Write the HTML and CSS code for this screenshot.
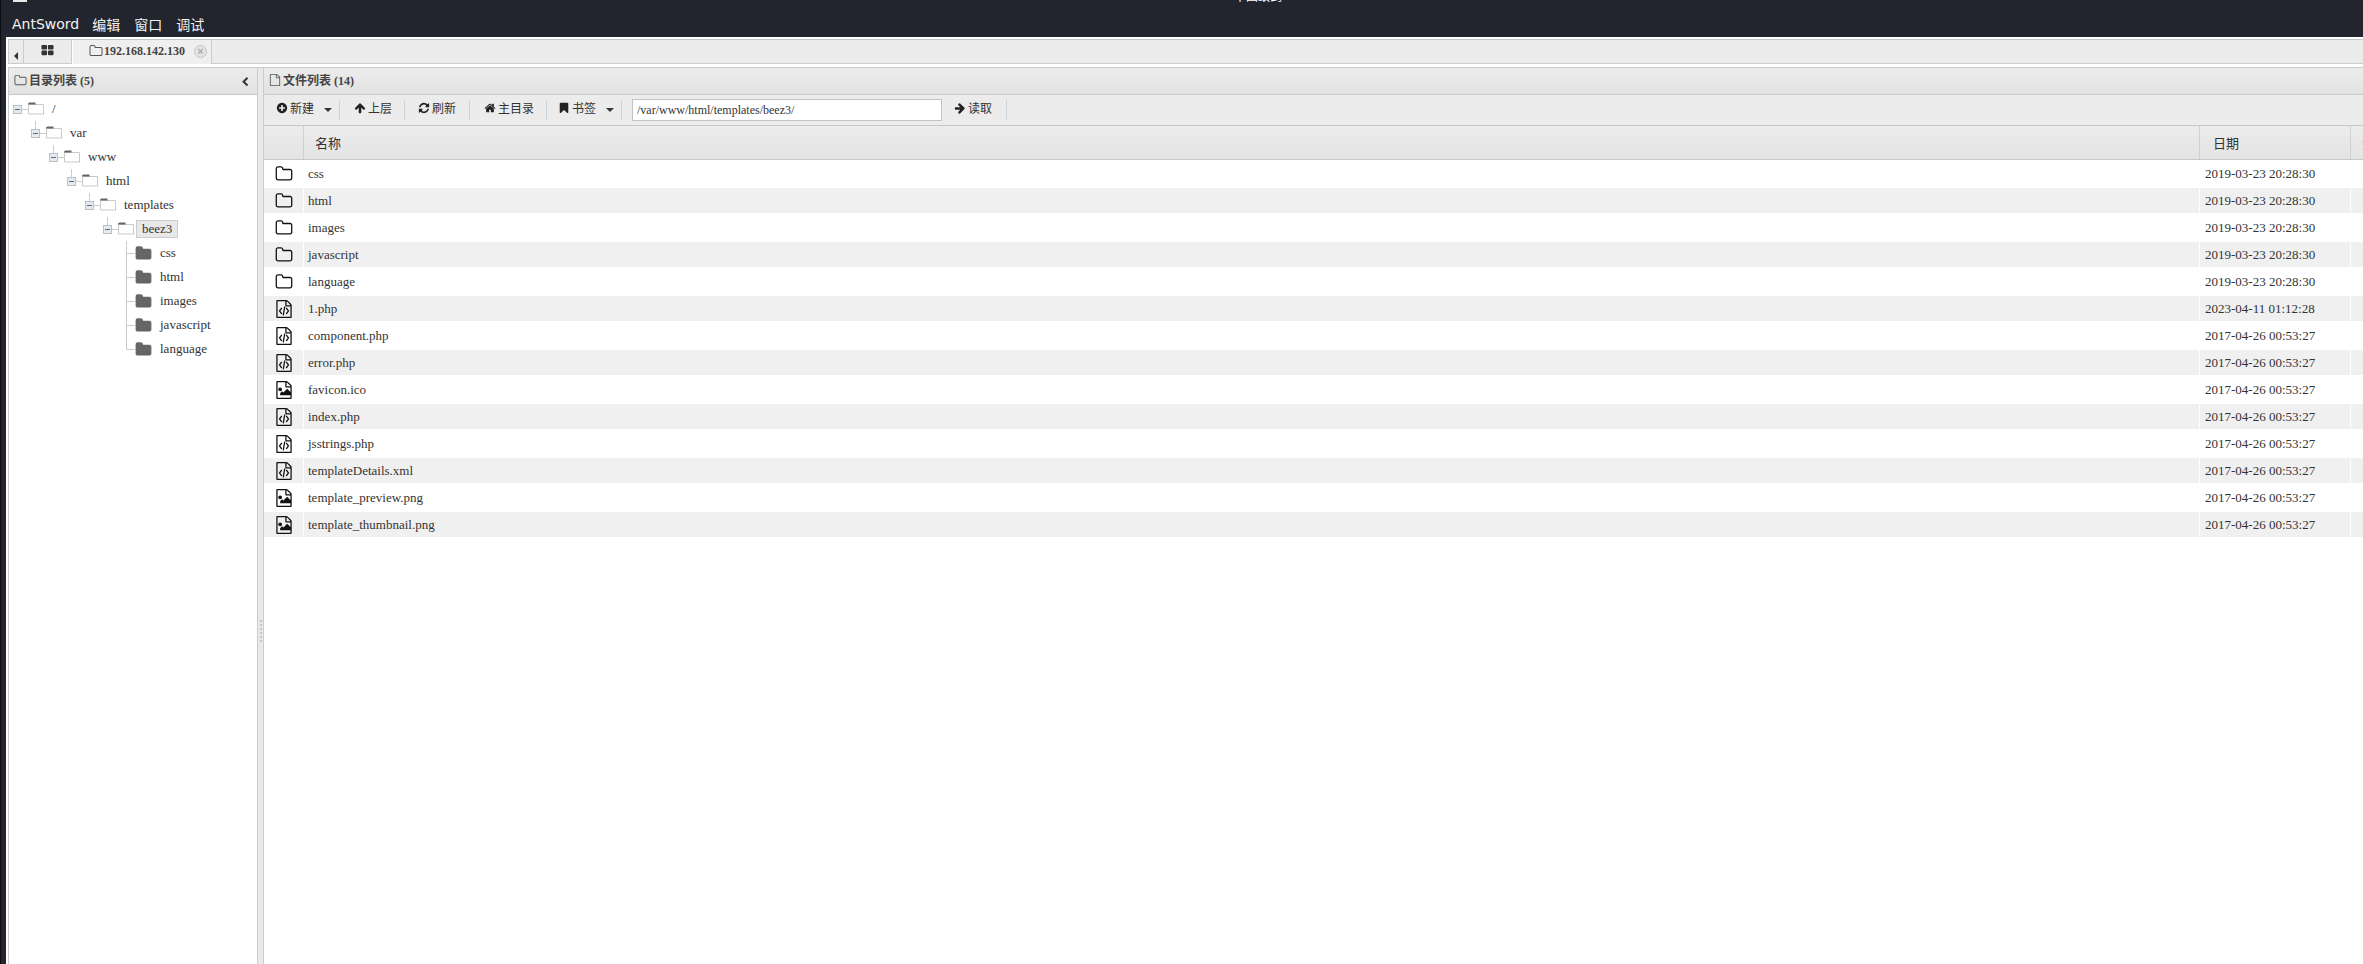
FILE: index.html
```html
<!DOCTYPE html>
<html lang="zh">
<head>
<meta charset="utf-8">
<title>中国蚁剑</title>
<link rel="stylesheet" href="styles.css">
</head>
<body>
<svg class="defs" aria-hidden="true">
  <symbol id="fa-folder-o" viewBox="0 0 1792 1792"><path d="M1600 1312v-704q0-40-28-68t-68-28h-704q-40 0-68-28t-28-68v-64q0-40-28-68t-68-28h-320q-40 0-68 28t-28 68v960q0 40 28 68t68 28h1216q40 0 68-28t28-68zm128-704v704q0 92-66 158t-158 66h-1216q-92 0-158-66t-66-158v-960q0-92 66-158t158-66h320q92 0 158 66t66 158v32h672q92 0 158 66t66 158z"/></symbol>
  <symbol id="fa-folder" viewBox="0 0 1792 1792"><path d="M1728 608v704q0 92-66 158t-158 66h-1216q-92 0-158-66t-66-158v-960q0-92 66-158t158-66h320q92 0 158 66t66 158v32h672q92 0 158 66t66 158z"/></symbol>
  <symbol id="fa-file-o" viewBox="0 0 1792 1792"><path d="M1596 380q28 28 48 76t20 88v1152q0 40-28 68t-68 28h-1344q-40 0-68-28t-28-68v-1600q0-40 28-68t68-28h896q40 0 88 20t76 48zm-444-244v376h376q-10-29-22-41l-313-313q-12-12-41-22zm384 1528v-1024h-416q-40 0-68-28t-28-68v-416h-768v1536h1280z"/></symbol>
  <symbol id="fa-file-code" viewBox="0 0 1792 1792"><path d="M1596 380q28 28 48 76t20 88v1152q0 40-28 68t-68 28h-1344q-40 0-68-28t-28-68v-1600q0-40 28-68t68-28h896q40 0 88 20t76 48zm-444-244v376h376q-10-29-22-41l-313-313q-12-12-41-22zm384 1528v-1024h-416q-40 0-68-28t-28-68v-416h-768v1536h1280zm-928-896q8-11 21-12.5t24 6.5l51 38q11 8 12.5 21t-6.5 24l-182 243 182 243q8 11 6.5 24t-12.5 21l-51 38q-11 8-24 6.5t-21-12.5l-226-301q-14-19 0-38zm802 301q14 19 0 38l-226 301q-8 11-21 12.5t-24-6.5l-51-38q-11-8-12.5-21t6.5-24l182-243-182-243q-8-11-6.5-24t12.5-21l51-38q11-8 24-6.5t21 12.5zm-620 461q-13-2-20.5-13t-5.5-24l138-831q2-13 13-20.5t24-5.5l63 10q13 2 20.5 13t5.5 24l-138 831q-2 13-13 20.5t-24 5.5z"/></symbol>
  <symbol id="fa-file-image" viewBox="0 0 1792 1792"><path d="M1596 380q28 28 48 76t20 88v1152q0 40-28 68t-68 28h-1344q-40 0-68-28t-28-68v-1600q0-40 28-68t68-28h896q40 0 88 20t76 48zm-444-244v376h376q-10-29-22-41l-313-313q-12-12-41-22zm384 1528v-1024h-416q-40 0-68-28t-28-68v-416h-768v1536h1280zM512 1408v-192l192-192 128 128 384-384 320 320v320zM512 640a136 136 0 1 1 0 384a136 136 0 1 1 0-384z"/></symbol>
  <symbol id="fa-plus-circle" viewBox="0 0 1792 1792"><path d="M1344 960v-128q0-26-19-45t-45-19h-256v-256q0-26-19-45t-45-19h-128q-26 0-45 19t-19 45v256h-256q-26 0-45 19t-19 45v128q0 26 19 45t45 19h256v256q0 26 19 45t45 19h128q26 0 45-19t19-45v-256h256q26 0 45-19t19-45zm320-64q0 209-103 385.5t-279.5 279.5-385.5 103-385.5-103-279.5-279.5-103-385.5 103-385.5 279.5-279.5 385.5-103 385.5 103 279.5 279.5 103 385.5z"/></symbol>
  <symbol id="fa-arrow-up" viewBox="0 0 1792 1792"><path d="M1675 971q0 51-37 90l-75 75q-38 38-91 38-54 0-90-38l-294-293v704q0 52-37.5 84.5t-90.5 32.5h-128q-53 0-90.5-32.5t-37.5-84.5v-704l-294 293q-36 38-90 38t-90-38l-75-75q-38-38-38-90 0-53 38-91l651-651q35-37 90-37 54 0 91 37l651 651q37 39 37 91z"/></symbol>
  <symbol id="fa-arrow-right" viewBox="0 0 1792 1792"><path d="M1600 960q0 54-37 91l-651 651q-39 37-91 37-51 0-90-37l-75-75q-38-38-38-91t38-91l293-293h-704q-52 0-84.5-37.5t-32.5-90.5v-128q0-53 32.5-90.5t84.5-37.5h704l-293-294q-38-36-38-90t38-90l75-75q38-38 90-38 53 0 91 38l651 651q37 35 37 90z"/></symbol>
  <symbol id="fa-refresh" viewBox="0 0 1792 1792"><path d="M1639 1056q0 5-1 7-64 268-268 434.5t-478 166.5q-146 0-282.5-55t-243.5-157l-129 129q-19 19-45 19t-45-19-19-45v-448q0-26 19-45t45-19h448q26 0 45 19t19 45-19 45l-137 137q71 66 161 102t187 36q134 0 250-65t186-179q11-17 53-117 8-23 30-23h192q13 0 22.5 9.5t9.5 22.5zm25-800v448q0 26-19 45t-45 19h-448q-26 0-45-19t-19-45 19-45l138-138q-148-137-349-137-134 0-250 65t-186 179q-11 17-53 117-8 23-30 23h-199q-13 0-22.5-9.5t-9.5-22.5v-7q65-268 270-434.5t480-166.5q146 0 284 55.5t245 156.5l130-129q19-19 45-19t45 19 19 45z"/></symbol>
  <symbol id="fa-home" viewBox="0 0 1792 1792"><path d="M1472 992v480q0 26-19 45t-45 19h-384v-384h-256v384h-384q-26 0-45-19t-19-45v-480q0-1 .5-3t.5-3l575-474 575 474q1 2 1 6zm223-69l-62 74q-8 9-21 11h-3q-13 0-21-7l-692-577-692 577q-12 8-24 7-13-2-21-11l-62-74q-8-10-7-23.5t11-21.5l719-599q32-26 76-26t76 26l244 204v-195q0-14 9-23t23-9h192q14 0 23 9t9 23v408l219 182q10 8 11 21.5t-7 23.5z"/></symbol>
  <symbol id="fa-bookmark" viewBox="0 0 1792 1792"><path d="M1420 128q23 0 44 9 33 13 52.5 41t19.5 62v1289q0 34-19.5 62t-52.5 41q-19 8-44 8-48 0-83-32l-441-424-441 424q-36 33-83 33-23 0-44-9-33-13-52.5-41t-19.5-62v-1289q0-34 19.5-62t52.5-41q21-9 44-9h1048z"/></symbol>
  <symbol id="fa-th-large" viewBox="0 0 1792 1792"><path d="M832 1024v384q0 52-38 90t-90 38h-512q-52 0-90-38t-38-90v-384q0-52 38-90t90-38h512q52 0 90 38t38 90zm0-768v384q0 52-38 90t-90 38h-512q-52 0-90-38t-38-90v-384q0-52 38-90t90-38h512q52 0 90 38t38 90zm896 768v384q0 52-38 90t-90 38h-512q-52 0-90-38t-38-90v-384q0-52 38-90t90-38h512q52 0 90 38t38 90zm0-768v384q0 52-38 90t-90 38h-512q-52 0-90-38t-38-90v-384q0-52 38-90t90-38h512q52 0 90 38t38 90z"/></symbol>
  <symbol id="fa-chevron-left" viewBox="0 0 1792 1792"><path d="M1427 301l-531 531 531 531q19 19 19 45t-19 45l-166 166q-19 19-45 19t-45-19l-742-742q-19-19-19-45t19-45l742-742q19-19 45-19t45 19l166 166q19 19 19 45t-19 45z"/></symbol>
  <symbol id="tree-open" viewBox="0 0 16 13">
    <path d="M.5 2.5h15v9.5h-15z" fill="#fff" stroke="#c9c9c9"/>
    <path d="M0 2.5h7.5V.5H1.5L0 1.5z" fill="#666"/>
    <path d="M1 12.5h15" stroke="#e4e4e4"/>
  </symbol>
  <symbol id="tree-exp" viewBox="0 0 9 9">
    <rect x=".5" y=".5" width="8" height="8" fill="#e4eaf0" stroke="#b5c2cc"/>
    <path d="M2 4.5h5" stroke="#5f6a72"/>
  </symbol>
</svg>

<div class="shell">
  <header class="chrome">
    <div class="title-strip">
      <span class="win-icon"></span>
      <span class="win-title">中国蚁剑</span>
    </div>
    <nav class="menubar">
      <span class="brand">AntSword</span><span>编辑</span><span>窗口</span><span>调试</span>
    </nav>
  </header>

  <div class="workspace">
    <div class="tabbar">
      <div class="tab-arrow"></div>
      <div class="tab tab-home"><svg class="ic ic-13"><use href="#fa-th-large"/></svg></div>
      <div class="tab tab-active">
        <svg class="ic ic-14 muted"><use href="#fa-folder-o"/></svg>
        <span class="tab-label">192.168.142.130</span>
        <span class="tab-close">×</span>
      </div>
      <div class="tab-rest"></div>
    </div>

    <div class="panes">
      <aside class="pane-left">
        <div class="panel-head">
          <svg class="ic ic-13 muted"><use href="#fa-folder-o"/></svg>
          <span class="panel-title">目录列表 (5)</span>
          <svg class="ic collapse"><use href="#fa-chevron-left"/></svg>
        </div>
        <div class="tree">
          <div class="node l0"><svg class="exp"><use href="#tree-exp"/></svg><i class="hline"></i><svg class="tfolder"><use href="#tree-open"/></svg><span class="tlabel">/</span></div>
          <div class="node l1"><svg class="exp"><use href="#tree-exp"/></svg><i class="hline"></i><svg class="tfolder"><use href="#tree-open"/></svg><span class="tlabel">var</span></div>
          <div class="node l2"><svg class="exp"><use href="#tree-exp"/></svg><i class="hline"></i><svg class="tfolder"><use href="#tree-open"/></svg><span class="tlabel">www</span></div>
          <div class="node l3"><svg class="exp"><use href="#tree-exp"/></svg><i class="hline"></i><svg class="tfolder"><use href="#tree-open"/></svg><span class="tlabel">html</span></div>
          <div class="node l4"><svg class="exp"><use href="#tree-exp"/></svg><i class="hline"></i><svg class="tfolder"><use href="#tree-open"/></svg><span class="tlabel">templates</span></div>
          <div class="node l5"><svg class="exp"><use href="#tree-exp"/></svg><i class="hline"></i><svg class="tfolder"><use href="#tree-open"/></svg><span class="tlabel selected">beez3</span></div>
          <div class="leaves">
            <div class="leaf"><i class="hline leaf-line"></i><svg class="lfolder"><use href="#fa-folder"/></svg><span class="tlabel">css</span></div>
            <div class="leaf"><i class="hline leaf-line"></i><svg class="lfolder"><use href="#fa-folder"/></svg><span class="tlabel">html</span></div>
            <div class="leaf"><i class="hline leaf-line"></i><svg class="lfolder"><use href="#fa-folder"/></svg><span class="tlabel">images</span></div>
            <div class="leaf"><i class="hline leaf-line"></i><svg class="lfolder"><use href="#fa-folder"/></svg><span class="tlabel">javascript</span></div>
            <div class="leaf"><i class="hline leaf-line"></i><svg class="lfolder"><use href="#fa-folder"/></svg><span class="tlabel">language</span></div>
          </div>
        </div>
      </aside>

      <div class="splitter"><span class="grip"></span></div>

      <main class="pane-right">
        <div class="panel-head">
          <svg class="ic ic-12 muted"><use href="#fa-file-o"/></svg>
          <span class="panel-title">文件列表 (14)</span>
        </div>
        <div class="toolbar">
          <button class="tbtn w-new"><svg class="ic ic-12"><use href="#fa-plus-circle"/></svg>新建<i class="caret"></i></button>
          <button class="tbtn w-up"><svg class="ic ic-12"><use href="#fa-arrow-up"/></svg>上层</button>
          <button class="tbtn w-refresh"><svg class="ic ic-12"><use href="#fa-refresh"/></svg>刷新</button>
          <button class="tbtn w-home"><svg class="ic ic-12"><use href="#fa-home"/></svg>主目录</button>
          <button class="tbtn w-mark"><svg class="ic ic-12"><use href="#fa-bookmark"/></svg>书签<i class="caret"></i></button>
          <div class="path-wrap"><input class="path" type="text" value="/var/www/html/templates/beez3/"></div>
          <button class="tbtn w-read"><svg class="ic ic-12"><use href="#fa-arrow-right"/></svg>读取</button>
        </div>
        <div class="grid">
          <div class="row head"><div class="cell"></div><div class="cell">名称</div><div class="cell">日期</div><div class="cell">大小</div></div>
          <div class="row"><div class="cell"><svg class="ficon"><use href="#fa-folder-o"/></svg></div><div class="cell">css</div><div class="cell">2019-03-23 20:28:30</div><div class="cell"></div></div>
          <div class="row"><div class="cell"><svg class="ficon"><use href="#fa-folder-o"/></svg></div><div class="cell">html</div><div class="cell">2019-03-23 20:28:30</div><div class="cell"></div></div>
          <div class="row"><div class="cell"><svg class="ficon"><use href="#fa-folder-o"/></svg></div><div class="cell">images</div><div class="cell">2019-03-23 20:28:30</div><div class="cell"></div></div>
          <div class="row"><div class="cell"><svg class="ficon"><use href="#fa-folder-o"/></svg></div><div class="cell">javascript</div><div class="cell">2019-03-23 20:28:30</div><div class="cell"></div></div>
          <div class="row"><div class="cell"><svg class="ficon"><use href="#fa-folder-o"/></svg></div><div class="cell">language</div><div class="cell">2019-03-23 20:28:30</div><div class="cell"></div></div>
          <div class="row"><div class="cell"><svg class="ficon"><use href="#fa-file-code"/></svg></div><div class="cell">1.php</div><div class="cell">2023-04-11 01:12:28</div><div class="cell"></div></div>
          <div class="row"><div class="cell"><svg class="ficon"><use href="#fa-file-code"/></svg></div><div class="cell">component.php</div><div class="cell">2017-04-26 00:53:27</div><div class="cell"></div></div>
          <div class="row"><div class="cell"><svg class="ficon"><use href="#fa-file-code"/></svg></div><div class="cell">error.php</div><div class="cell">2017-04-26 00:53:27</div><div class="cell"></div></div>
          <div class="row"><div class="cell"><svg class="ficon"><use href="#fa-file-image"/></svg></div><div class="cell">favicon.ico</div><div class="cell">2017-04-26 00:53:27</div><div class="cell"></div></div>
          <div class="row"><div class="cell"><svg class="ficon"><use href="#fa-file-code"/></svg></div><div class="cell">index.php</div><div class="cell">2017-04-26 00:53:27</div><div class="cell"></div></div>
          <div class="row"><div class="cell"><svg class="ficon"><use href="#fa-file-code"/></svg></div><div class="cell">jsstrings.php</div><div class="cell">2017-04-26 00:53:27</div><div class="cell"></div></div>
          <div class="row"><div class="cell"><svg class="ficon"><use href="#fa-file-code"/></svg></div><div class="cell">templateDetails.xml</div><div class="cell">2017-04-26 00:53:27</div><div class="cell"></div></div>
          <div class="row"><div class="cell"><svg class="ficon"><use href="#fa-file-image"/></svg></div><div class="cell">template_preview.png</div><div class="cell">2017-04-26 00:53:27</div><div class="cell"></div></div>
          <div class="row"><div class="cell"><svg class="ficon"><use href="#fa-file-image"/></svg></div><div class="cell">template_thumbnail.png</div><div class="cell">2017-04-26 00:53:27</div><div class="cell"></div></div>
        </div>
      </main>
    </div>
  </div>
</div>
</body>
</html>
```
FILE: styles.css
```css
* { box-sizing: border-box; }
html, body { margin: 0; height: 100%; overflow: hidden; }
body {
  font-family: "Liberation Serif", "Noto Sans CJK SC", serif;
  font-size: 13px;
  color: #333;
  background: #22252e;
}
.defs { width: 0; height: 0; display: block; overflow: hidden; }

.shell {
  height: 964px;
  display: flex;
  flex-direction: column;
  border-left: 1px solid #0c0d10;
  padding-left: 5px;
  background: #22252e;
}

/* window chrome */
.chrome { height: 37px; flex: none; color: #fff; }
.title-strip {
  height: 13px;
  margin-top: -11px;
  display: flex;
  align-items: flex-end;
  overflow: hidden;
  font-size: 12px;
  line-height: 13px;
}
.win-icon { width: 14px; height: 13px; margin-left: 7px; background: #e8e8e8; flex: none; }
.win-title { margin-left: 1207px; font-family: "Noto Sans CJK SC", sans-serif; }
.menubar {
  display: flex;
  gap: 14px;
  height: 35px;
  align-items: center;
  padding-left: 6px;
  padding-top: 8px;
  font-family: "DejaVu Sans", "Noto Sans CJK SC", sans-serif;
  font-size: 14px;
  color: #f2f2f2;
}
.brand { margin-right: -1px; }

/* workspace */
.workspace {
  flex: 1;
  min-height: 0;
  display: flex;
  flex-direction: column;
  background: #fff;
  padding: 2px 0 0 2px;
}
.ic { display: block; flex: none; fill: currentColor; }
.ic-12 { width: 12px; height: 12px; }
.ic-13 { width: 13px; height: 13px; }
.ic-14 { width: 14px; height: 14px; }
.muted { color: #555; }

/* tab bar */
.tabbar {
  height: 25px;
  flex: none;
  display: flex;
  border-top: 1px solid #c8c8c8;
  background: #ececec;
}
.tab-arrow {
  width: 16px;
  border-left: 1px solid #ccc;
  border-right: 1px solid #ccc;
  border-bottom: 1px solid #ccc;
  position: relative;
}
.tab-arrow::after {
  content: "";
  position: absolute;
  left: 5px;
  top: 12px;
  border: 4px solid transparent;
  border-left-width: 0;
  border-right: 4px solid #333;
}
.tab {
  display: flex;
  align-items: center;
  border-right: 1px solid #ccc;
  flex: none;
}
.tab-home {
  width: 48px;
  justify-content: center;
  border-bottom: 1px solid #ccc;
  padding-bottom: 2px;
  color: #333;
}
.tab-active {
  width: 140px;
  padding-left: 16px;
  padding-bottom: 2px;
  background: #efefef;
  border-left: 1px solid #fff;
}
.tab-label { margin-left: 1px; font-weight: 700; font-size: 12px; color: #444; }
.tab-close {
  width: 13px;
  height: 13px;
  margin-left: 9px;
  border-radius: 50%;
  border: 1px solid #c4c4c4;
  background: #e4e4e4;
  color: #aaa;
  font: 700 11px/11px "Liberation Sans", sans-serif;
  text-align: center;
}
.tab-rest { flex: 1; border-bottom: 1px solid #ccc; }

/* panes */
.panes {
  flex: 1;
  min-height: 0;
  display: flex;
  margin-top: 3px;
  border-top: 1px solid #ccc;
}
.pane-left {
  width: 250px;
  flex: none;
  border-left: 1px solid #ccc;
  border-right: 1px solid #ccc;
}
.splitter {
  width: 5px;
  flex: none;
  background: #e9e9e9;
  display: flex;
  justify-content: center;
}
.grip {
  width: 2px;
  height: 24px;
  margin-top: 552px;
  background: repeating-linear-gradient(#c4c4c4 0 2px, transparent 2px 4px);
}
.pane-right {
  flex: 1;
  min-width: 0;
  border-left: 1px solid #ccc;
}

.panel-head {
  height: 27px;
  display: flex;
  align-items: center;
  gap: 2px;
  padding: 0 5px 2px;
  border-bottom: 1px solid #c8c8c8;
  background: linear-gradient(#ececec, #e2e2e2);
  color: #444;
}
.panel-title { font-size: 12px; font-weight: 700; color: #444; }
.collapse { width: 10px; height: 10px; margin-left: auto; margin-right: 2px; margin-top: 3px; color: #333; }

/* tree */
.tree { padding-top: 2px; color: #333; }
.node {
  position: relative;
  height: 24px;
  display: flex;
  align-items: center;
}
.node + .node::before {
  content: "";
  position: absolute;
  left: 4px;
  top: 0;
  width: 1px;
  height: 8px;
  background: #ccc;
}
.l0 { margin-left: 4px; }
.l1 { margin-left: 22px; }
.l2 { margin-left: 40px; }
.l3 { margin-left: 58px; }
.l4 { margin-left: 76px; }
.l5 { margin-left: 94px; }
.exp { width: 9px; height: 9px; flex: none; }
.hline { display: block; width: 6px; height: 1px; background: #ccc; flex: none; }
.tfolder { width: 16px; height: 13px; flex: none; margin-top: -2px; }
.tlabel {
  margin-left: 2px;
  padding: 0 5px;
  height: 18px;
  line-height: 16px;
  border: 1px solid transparent;
}
.selected { background: #e8e8e8; border-color: #ccc; }
.leaves { margin-left: 117px; }
.leaf {
  position: relative;
  height: 24px;
  display: flex;
  align-items: center;
}
.leaf::before {
  content: "";
  position: absolute;
  left: 0;
  top: 0;
  bottom: 0;
  width: 1px;
  background: #ccc;
}
.leaf:last-child::before { bottom: 50%; }
.leaf-line { width: 9px; }
.lfolder { width: 17px; height: 17px; flex: none; fill: #666; margin-left: 0; }

/* toolbar */
.toolbar {
  height: 31px;
  display: flex;
  align-items: center;
  border-bottom: 1px solid #c8c8c8;
  background: #ececec;
}
.tbtn {
  height: 20px;
  display: flex;
  align-items: center;
  gap: 2px;
  padding: 0 0 4px 0;
  background: none;
  border: 0;
  border-right: 1px solid #c9d4dc;
  font: 12px "Liberation Serif", "Noto Sans CJK SC", serif;
  color: #333;
  flex: none;
}
.tbtn .ic { color: #222; }
.w-new { width: 76px; padding-left: 12px; }
.w-up { width: 65px; padding-left: 14px; }
.w-refresh { width: 65px; padding-left: 13px; }
.w-home { width: 77px; padding-left: 14px; }
.w-mark { width: 75px; padding-left: 11px; }
.w-read { width: 64px; padding-left: 11px; }
.caret {
  width: 0;
  height: 0;
  margin-left: 8px;
  margin-top: 3px;
  border: 4px solid transparent;
  border-bottom-width: 0;
  border-top-color: #333;
}
.path-wrap { width: 321px; padding-left: 10px; flex: none; }
.path {
  display: block;
  width: 310px;
  height: 22px;
  padding: 0 4px;
  border: 1px solid #c4c4c4;
  font: 12px "Liberation Serif", serif;
  color: #333;
  background: #fff;
  outline: 0;
}

/* grid */
.row {
  display: grid;
  grid-template-columns: 39px 1896px 151px 1fr;
  height: 27px;
}
.cell {
  display: flex;
  align-items: center;
  border-block: 1px solid #fff;
  padding-left: 4px;
  overflow: hidden;
  white-space: nowrap;
}
.cell + .cell { border-left: 1px solid #fff; }
.row:not(.head):nth-child(odd) .cell { background: #f0f0f0; }
.row:not(.head) .cell:first-child { padding-left: 11px; }
.row:not(.head) .cell:nth-child(3) { padding-left: 5px; }
.head {
  height: 34px;
  background: linear-gradient(#ececec, #e4e4e4);
  border-bottom: 1px solid #c8c8c8;
}
.head .cell {
  border-block: 0;
  border-left: 1px solid #d0d0d0;
  padding-left: 11px;
  color: #333;
  font-size: 13px;
}
.head .cell:first-child { border-left: 0; }
.head .cell:nth-child(3) { padding-left: 13px; }
.ficon { width: 18px; height: 18px; flex: none; fill: #111; }
```
